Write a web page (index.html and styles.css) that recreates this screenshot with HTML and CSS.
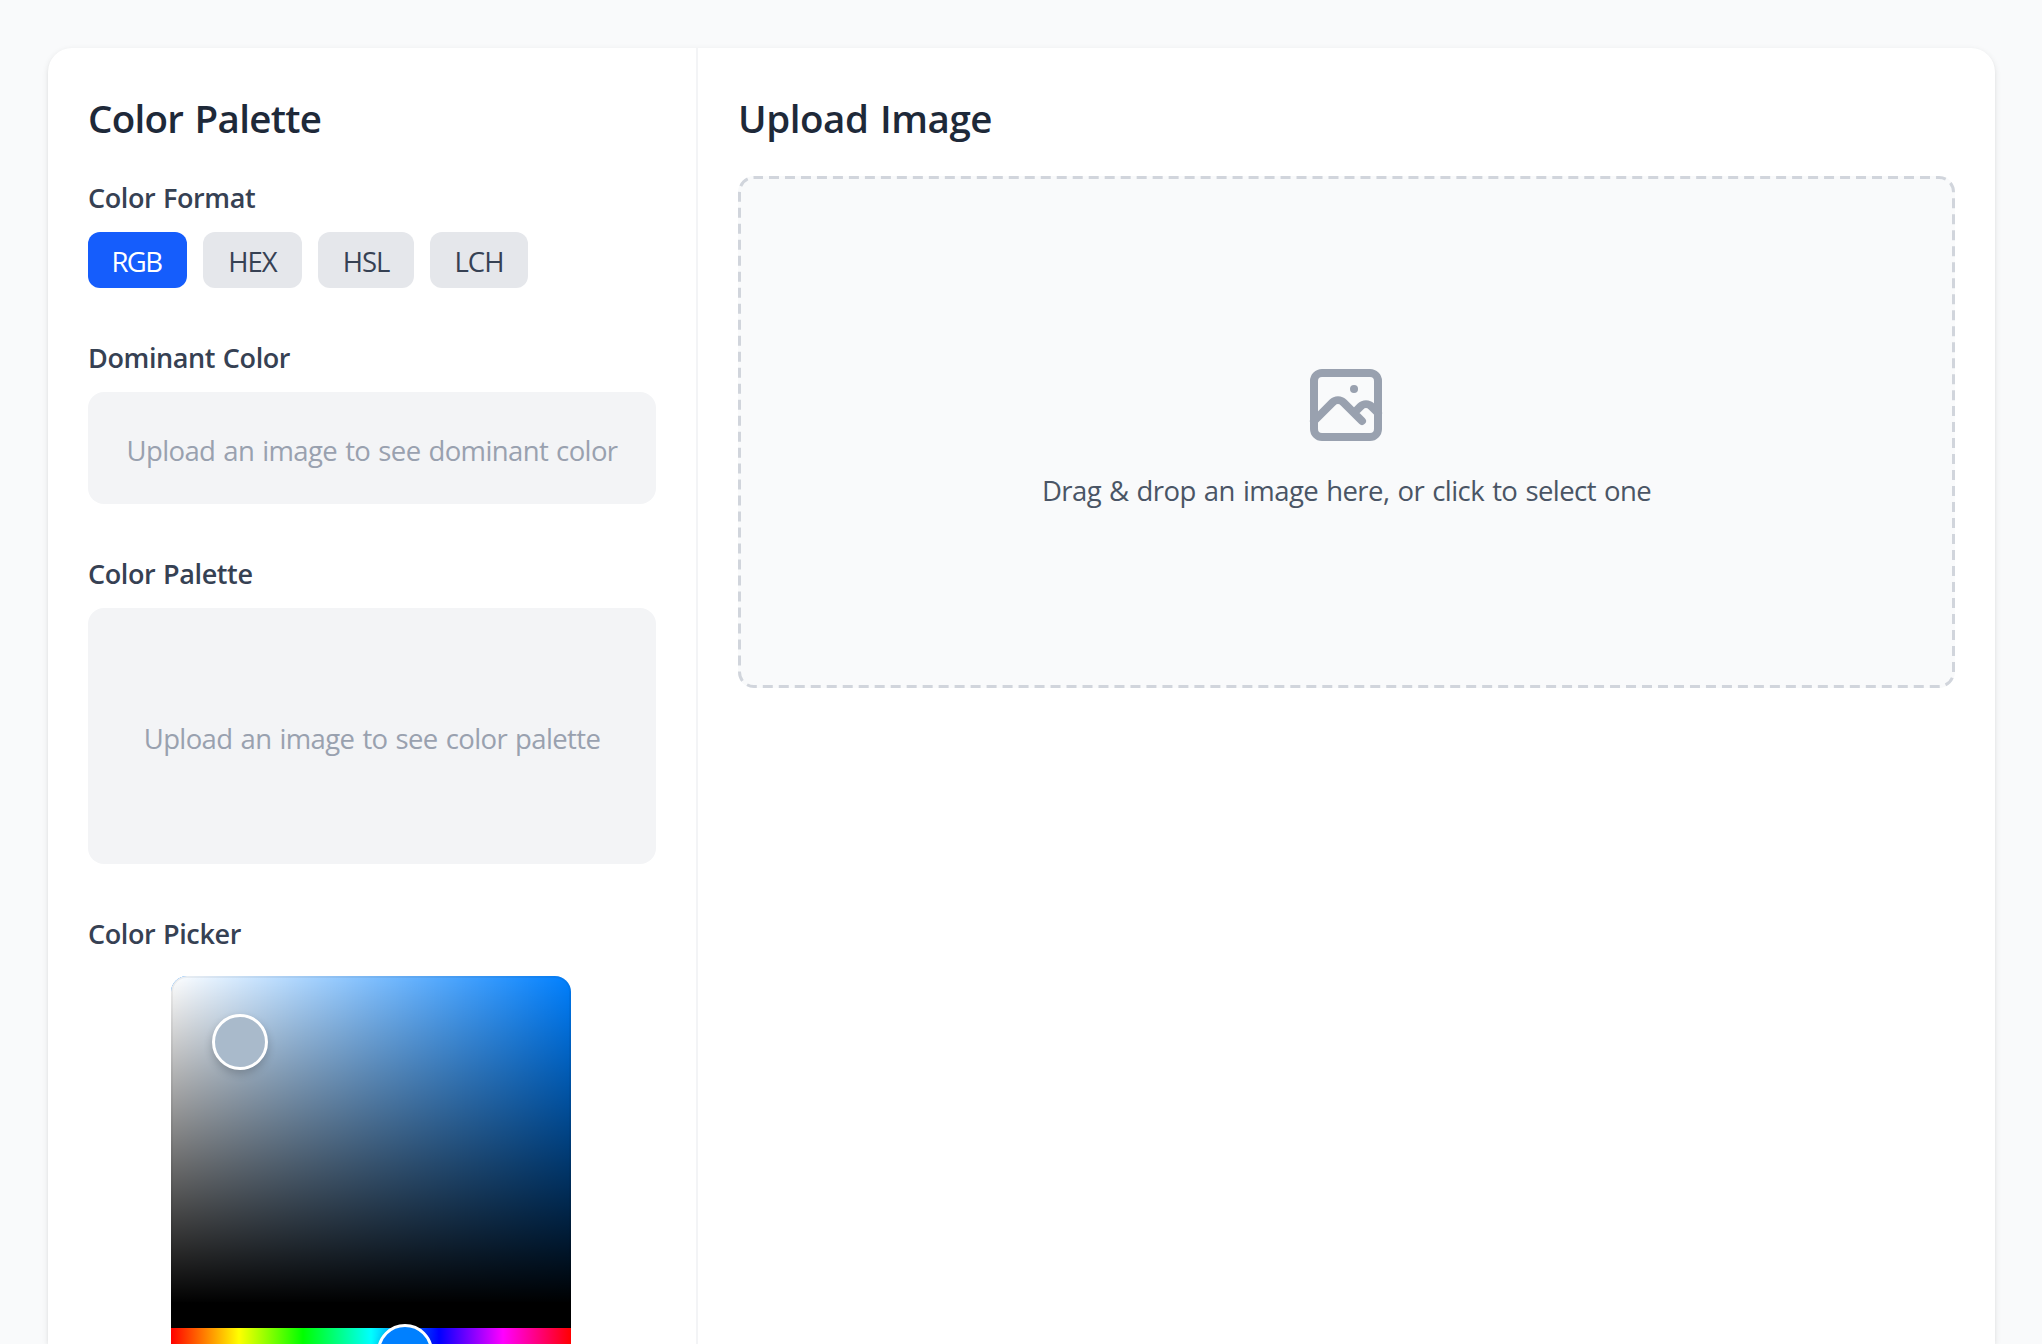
FILE: index.html
```html
<!DOCTYPE html>
<html lang="en">
<head>
<meta charset="utf-8">
<title>Color Palette</title>
<link rel="stylesheet" href="styles.css">
</head>
<body>
<main class="card">
  <aside class="sidebar">
    <h2 class="title t-palette">Color Palette</h2>
    <section class="group">
      <h3 class="label">Color Format</h3>
      <div class="formats">
        <button class="format active rgb">RGB</button>
        <button class="format hex">HEX</button>
        <button class="format hsl">HSL</button>
        <button class="format lch">LCH</button>
      </div>
    </section>
    <section class="group">
      <h3 class="label">Dominant Color</h3>
      <div class="placeholder dominant">Upload an image to see dominant color</div>
    </section>
    <section class="group">
      <h3 class="label">Color Palette</h3>
      <div class="placeholder palette">Upload an image to see color palette</div>
    </section>
    <section class="group">
      <h3 class="label">Color Picker</h3>
      <div class="picker">
        <div class="saturation"><div class="pointer saturation-pointer"></div></div>
        <div class="hue"><div class="pointer hue-pointer"></div></div>
      </div>
    </section>
  </aside>
  <section class="content">
    <h2 class="title t-upload">Upload Image</h2>
    <div class="dropzone">
      <svg class="outline" viewBox="0 0 1217 512" fill="none"><rect x="1.5" y="1.5" width="1214" height="509" rx="14.5" stroke="#d1d5dc" stroke-width="3" stroke-dasharray="10 5.986" stroke-dashoffset="1"/></svg>
      <svg class="icon" viewBox="0 0 24 24" fill="none" stroke="currentColor" stroke-width="2" stroke-linecap="round" stroke-linejoin="round"><path d="M4 16l4.586-4.586a2 2 0 012.828 0L16 16m-2-2l1.586-1.586a2 2 0 012.828 0L20 14m-6-6h.01M6 20h12a2 2 0 002-2V6a2 2 0 00-2-2H6a2 2 0 00-2 2v12a2 2 0 002 2z"/></svg>
      <p class="hint">Drag &amp; drop an image here, or click to select one</p>
    </div>
  </section>
</main>
</body>
</html>
```
FILE: styles.css
```css
* { box-sizing: border-box; margin: 0; padding: 0; }
html { height: 100%; overflow: hidden; }
body {
  height: 100%;
  padding: 48px 47px 0 48px;
  overflow: hidden;
  background: #f9fafb;
  font: 400 27.5px/40px "Open Sans", "Noto Sans", sans-serif;
}
.card {
  display: flex;
  height: 1296px;
  background: #fff;
  border-radius: 24px 24px 0 0;
  box-shadow: 0 2px 6px rgba(0, 0, 0, .1), 0 2px 4px -2px rgba(0, 0, 0, .1);
}
.sidebar { width: 650px; padding: 40px; border-right: 2px solid #f3f4f6; }
.content { flex: 1; padding: 40px; }
.title {
  height: 64px;
  margin-bottom: 24px;
  font-size: 38.5px;
  line-height: 60px;
  font-weight: 600;
  color: #1e2939;
  white-space: nowrap;
}
.t-palette { letter-spacing: -.7px; word-spacing: 2px; }
.t-upload { letter-spacing: -.45px; word-spacing: 2px; }
.sidebar .title { margin-bottom: 16px; }
.label {
  height: 48px;
  margin-bottom: 16px;
  line-height: 60px;
  font-size: 27px;
  font-weight: 600;
  letter-spacing: -.38px;
  word-spacing: 1px;
  color: #364153;
  white-space: nowrap;
}
.group { margin-bottom: 40px; }
.formats { display: flex; gap: 16px; }
.format {
  height: 56px;
  border: 0;
  border-radius: 12px;
  background: #e5e7eb;
  color: #364153;
  font: inherit;
  letter-spacing: -1px;
  line-height: 56px;
  padding-top: 2px;
  text-align: center;
}
.active { background: #155dfc; color: #fff; }
.rgb, .hex { width: 99px; }
.rgb { letter-spacing: -1.5px; padding-right: 2px; }
.hsl { width: 96px; }
.lch { width: 98px; }
.placeholder {
  display: flex;
  align-items: center;
  justify-content: center;
  padding-top: 6px;
  border-radius: 16px;
  background: #f3f4f6;
  color: #99a1af;
  letter-spacing: -.62px;
  word-spacing: 1.5px;
  white-space: nowrap;
}
.dominant { height: 112px; }
.palette { height: 256px; }
.picker { width: 400px; height: 400px; margin: 24px 0 0 83px; }
.saturation {
  position: relative;
  height: 352px;
  border-bottom: 24px solid #000;
  border-radius: 16px 16px 0 0;
  background-color: #0080ff;
  background-image: linear-gradient(to top, #000, rgba(0, 0, 0, 0)), linear-gradient(to right, #fff, rgba(255, 255, 255, 0));
  box-shadow: inset 0 0 0 2px rgba(0, 0, 0, .05);
}
.hue {
  position: relative;
  height: 48px;
  border-radius: 0 0 16px 16px;
  background: linear-gradient(to right, #f00 0%, #ff0 17%, #0f0 33%, #0ff 50%, #00f 67%, #f0f 83%, #f00 100%);
}
.pointer {
  position: absolute;
  width: 56px;
  height: 56px;
  border: 3px solid #fff;
  border-radius: 50%;
  transform: translate(-50%, -50%);
  box-shadow: 0 4px 8px rgba(0, 0, 0, .2);
}
.saturation-pointer { left: 17.2%; top: 20%; background: #a9bacb; }
.hue-pointer { left: 58.4%; top: 50%; background: #0080ff; }
.dropzone {
  position: relative;
  display: flex;
  flex-direction: column;
  align-items: center;
  height: 512px;
  padding-top: 181px;
  border-radius: 16px;
  background: #f9fafb;
}
.outline { position: absolute; inset: 0; width: 100%; height: 100%; }
.icon { width: 96px; height: 96px; margin-right: 2px; color: #99a1af; }
.hint { margin-top: 18px; color: #4a5565; letter-spacing: -.57px; word-spacing: 1.5px; white-space: nowrap; }
```
